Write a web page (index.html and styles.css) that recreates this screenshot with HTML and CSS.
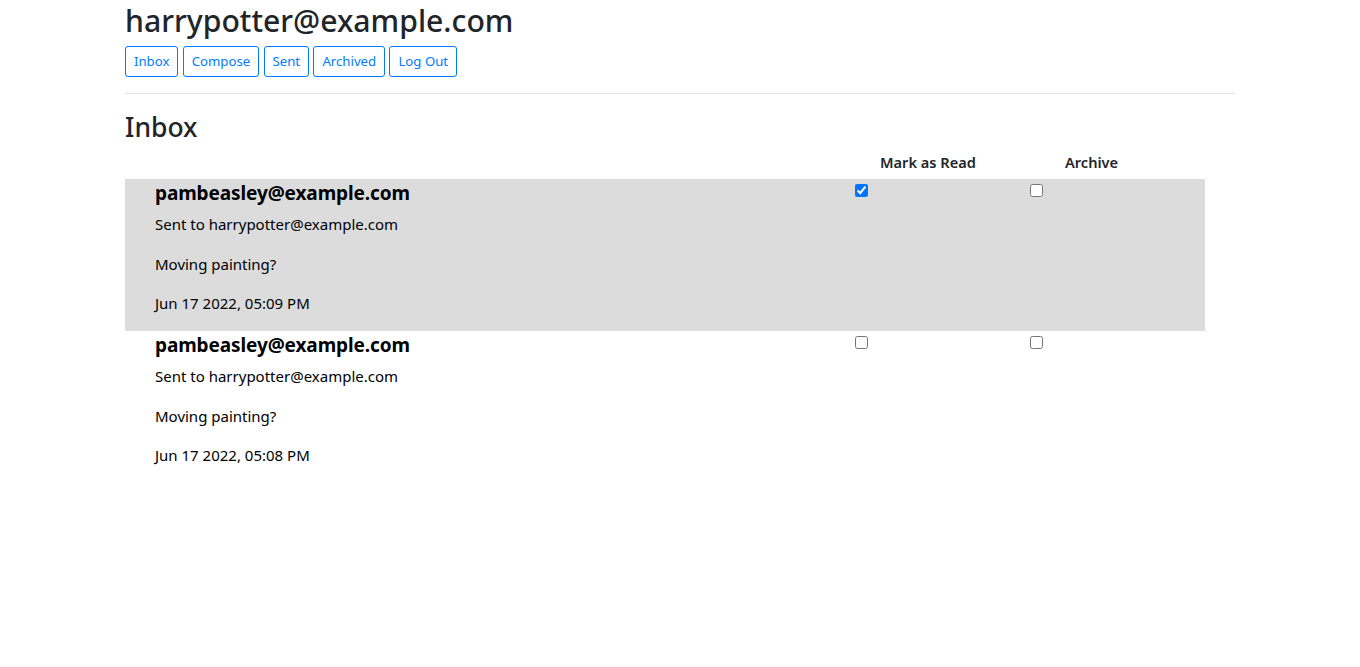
FILE: index.html
```html
<!DOCTYPE html>
<html>
<head>
<meta charset="utf-8">
<link rel="stylesheet" href="styles.css">
</head>
<body>
<div class="container">
  <h2 class="user">harrypotter@example.com</h2>
  <nav class="nav">
    <button class="btn">Inbox</button>
    <button class="btn">Compose</button>
    <button class="btn">Sent</button>
    <button class="btn">Archived</button>
    <button class="btn">Log Out</button>
  </nav>
  <hr class="rule">
  <h3 class="title">Inbox</h3>
  <div class="mailbox">
    <div class="head">
      <span></span>
      <span class="h-read">Mark as Read</span>
      <span class="h-arch">Archive</span>
    </div>
    <div class="mail read">
      <div class="info">
        <h5 class="sender">pambeasley@example.com</h5>
        <p>Sent to harrypotter@example.com</p>
        <p>Moving painting?</p>
        <p>Jun 17 2022, 05:09 PM</p>
      </div>
      <div class="cb"><input type="checkbox" checked></div>
      <div class="cb"><input type="checkbox"></div>
    </div>
    <div class="mail">
      <div class="info">
        <h5 class="sender">pambeasley@example.com</h5>
        <p>Sent to harrypotter@example.com</p>
        <p>Moving painting?</p>
        <p>Jun 17 2022, 05:08 PM</p>
      </div>
      <div class="cb"><input type="checkbox"></div>
      <div class="cb"><input type="checkbox"></div>
    </div>
  </div>
</div>
</body>
</html>
```
FILE: styles.css
```css
* { box-sizing: border-box; }
body {
  margin: 0;
  font-family: "Noto Sans", "Open Sans", sans-serif;
  font-size: 15px;
  line-height: 1.5;
  color: #212529;
  background: #fff;
}
.container {
  width: 1140px;
  margin: 0 auto;
  padding: 0 15px;
}
.user {
  margin: 0;
  padding-top: 3px;
  font-size: 30.2px;
  font-weight: 500;
  line-height: 1.2;
  height: 46px;
}
.nav {
  display: flex;
  gap: 4.3px;
  height: 31px;
}
.btn {
  font-family: inherit;
  font-size: 13.2px;
  line-height: 21px;
  padding: 4px 8px 4px;
  height: 31px;
  color: #007bff;
  background: transparent;
  border: 1px solid #007bff;
  border-radius: 3px;
}
.rule {
  margin: 16px 0;
  border: 0;
  border-top: 1px solid rgba(0,0,0,.1);
}
.title {
  margin: 0 0 8px;
  font-size: 26.5px;
  font-weight: 500;
  line-height: 1.2;
  height: 34px;
  padding-top: 2px;
}
.mailbox { width: 1080px; }
.head {
  display: grid;
  grid-template-columns: 755px 185px 140px;
  height: 27px;
  font-weight: 600;
  font-size: 14.6px;
  line-height: 22px;
  margin-top: -1px;
  margin-bottom: 1px;
}
.mail {
  display: grid;
  grid-template-columns: 730px 175px 175px;
  height: 152px;
  color: #000;
}
.mail.read { background: #dcdcdc; }
.info { padding-left: 30px; padding-top: 2px; }
.sender {
  margin: 0 0 7px;
  font-size: 19px;
  font-weight: bold;
  line-height: 24px;
  letter-spacing: -0.1px;
}
.info p {
  margin: 0 0 15.5px;
  font-size: 15px;
  line-height: 24px;
}
.cb input {
  margin: 5px 0 0;
  width: 13px;
  height: 13px;
  display: block;
}
```
